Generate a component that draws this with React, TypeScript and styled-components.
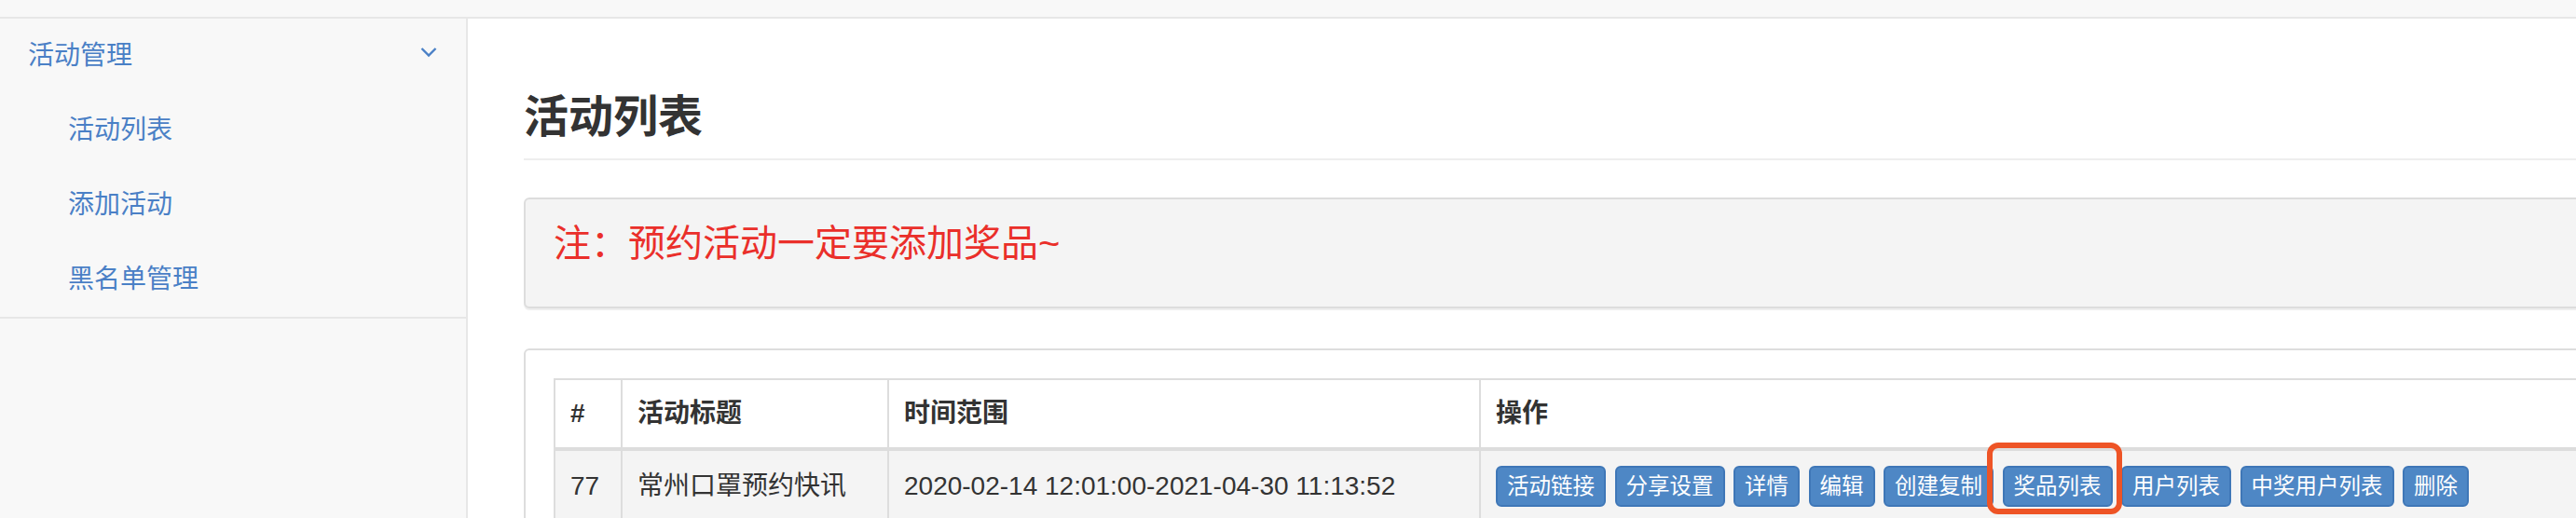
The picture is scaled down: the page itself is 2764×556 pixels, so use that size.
import React from "react";
import styled, { createGlobalStyle } from "styled-components";

const GlobalStyle = createGlobalStyle`
  html, body {
    margin: 0;
    padding: 0;
    height: 100%;
    background: #ffffff;
    overflow: hidden;
  }
  body {
    font-family: "Liberation Sans", "Noto Sans CJK SC", sans-serif;
    color: #333333;
  }
  * { box-sizing: border-box; }
`;

const Page = styled.div`
  display: flex;
  flex-direction: column;
  height: 100vh;
`;

const TopBar = styled.div`
  height: 20px;
  flex: none;
  background: #f8f8f8;
  border-bottom: 2px solid #e7e7e7;
`;

const Body = styled.div`
  flex: 1;
  display: flex;
  min-height: 0;
`;

const Sidebar = styled.nav`
  width: 502px;
  flex: none;
  background: #f8f8f8;
  border-right: 2px solid #e7e7e7;
`;

const Menu = styled.ul`
  list-style: none;
  margin: 0;
  padding: 0;
  border-bottom: 2px solid #e7e7e7;
`;

const MenuItem = styled.li<{ $sub?: boolean }>`
  height: 80px;
  display: flex;
  align-items: center;
  justify-content: space-between;
  padding: 0 31px 0 ${(p) => (p.$sub ? "73px" : "30px")};
  font-size: 28px;
  line-height: 40px;
  color: #4a80c6;
`;

const Chevron = styled.svg`
  width: 18px;
  height: 12px;
  display: block;
  margin-top: -8px;
`;

const Main = styled.main`
  flex: 1;
  min-width: 0;
  overflow: hidden;
  padding-left: 60px;
`;

const Content = styled.div`
  width: calc(100% + 120px);
`;

const Title = styled.h1`
  margin: 0;
  padding: 80px 0 18px;
  font-size: 48px;
  line-height: 52px;
  font-weight: 700;
  color: #333333;
  border-bottom: 2px solid #eeeeee;
`;

const Notice = styled.div`
  margin-top: 40px;
  padding: 19px 30px 39px;
  background: #f4f4f4;
  border: 2px solid #dddddd;
  border-radius: 6px;
  box-shadow: 0 2px 1px rgba(0, 0, 0, 0.07);
`;

const NoticeText = styled.p`
  margin: 0;
  font-size: 40px;
  line-height: 57px;
  color: #ea2f2a;
`;

const Panel = styled.section`
  margin-top: 43px;
  padding: 30px 30px 40px;
  background: #ffffff;
  border: 2px solid #dddddd;
  border-radius: 6px;
`;

const Table = styled.table`
  width: 100%;
  table-layout: fixed;
  border-collapse: separate;
  border-spacing: 0;
  border-top: 2px solid #dddddd;
  border-left: 2px solid #dddddd;
  font-size: 28px;
`;

const Th = styled.th<{ $w?: number }>`
  width: ${(p) => (p.$w ? `${p.$w}px` : "auto")};
  padding: 16px;
  line-height: 40px;
  text-align: left;
  font-weight: 700;
  color: #333333;
  border-right: 2px solid #dddddd;
  border-bottom: 4px solid #dddddd;
  background: #ffffff;
`;

const Td = styled.td`
  padding: 16px;
  line-height: 40px;
  color: #333333;
  vertical-align: middle;
  white-space: nowrap;
  border-right: 2px solid #dddddd;
  border-bottom: 2px solid #dddddd;
  background: #f4f4f4;
`;

const Actions = styled.div`
  display: flex;
  gap: 9.5px;
  align-items: center;
`;

const Button = styled.button`
  font-family: "Liberation Sans", "Noto Sans CJK SC", sans-serif;
  font-size: 23.5px;
  line-height: 36px;
  padding: 2px 10px;
  border: 2px solid #3f77b7;
  border-radius: 6px;
  background: #4e87c5;
  color: #ffffff;
  white-space: nowrap;
  cursor: pointer;
`;

const Marked = styled.span`
  position: relative;
  display: inline-flex;
`;

const Highlight = styled.span`
  position: absolute;
  top: -25px;
  left: -17px;
  right: -10px;
  bottom: -8px;
  border: 6px solid #ee5426;
  border-radius: 12px;
  pointer-events: none;
`;

const actions = [
  "活动链接",
  "分享设置",
  "详情",
  "编辑",
  "创建复制",
  "奖品列表",
  "用户列表",
  "中奖用户列表",
  "删除",
];

export default function App() {
  return (
    <>
      <GlobalStyle />
      <Page>
        <TopBar />
        <Body>
          <Sidebar>
            <Menu>
              <MenuItem>
                <span>活动管理</span>
                <Chevron viewBox="0 0 18 12">
                  <polyline
                    points="1.5,2 9,9.5 16.5,2"
                    fill="none"
                    stroke="#4a80c6"
                    strokeWidth="2.4"
                  />
                </Chevron>
              </MenuItem>
              <MenuItem $sub>活动列表</MenuItem>
              <MenuItem $sub>添加活动</MenuItem>
              <MenuItem $sub>黑名单管理</MenuItem>
            </Menu>
          </Sidebar>
          <Main>
            <Content>
              <Title>活动列表</Title>
              <Notice>
                <NoticeText>注：预约活动一定要添加奖品~</NoticeText>
              </Notice>
              <Panel>
                <Table>
                  <thead>
                    <tr>
                      <Th $w={72}>#</Th>
                      <Th $w={286}>活动标题</Th>
                      <Th $w={635}>时间范围</Th>
                      <Th>操作</Th>
                    </tr>
                  </thead>
                  <tbody>
                    <tr>
                      <Td>77</Td>
                      <Td>常州口罩预约快讯</Td>
                      <Td>2020-02-14 12:01:00-2021-04-30 11:13:52</Td>
                      <Td>
                        <Actions>
                          {actions.map((a) =>
                            a === "奖品列表" ? (
                              <Marked key={a}>
                                <Button>{a}</Button>
                                <Highlight />
                              </Marked>
                            ) : (
                              <Button key={a}>{a}</Button>
                            )
                          )}
                        </Actions>
                      </Td>
                    </tr>
                  </tbody>
                </Table>
              </Panel>
            </Content>
          </Main>
        </Body>
      </Page>
    </>
  );
}
